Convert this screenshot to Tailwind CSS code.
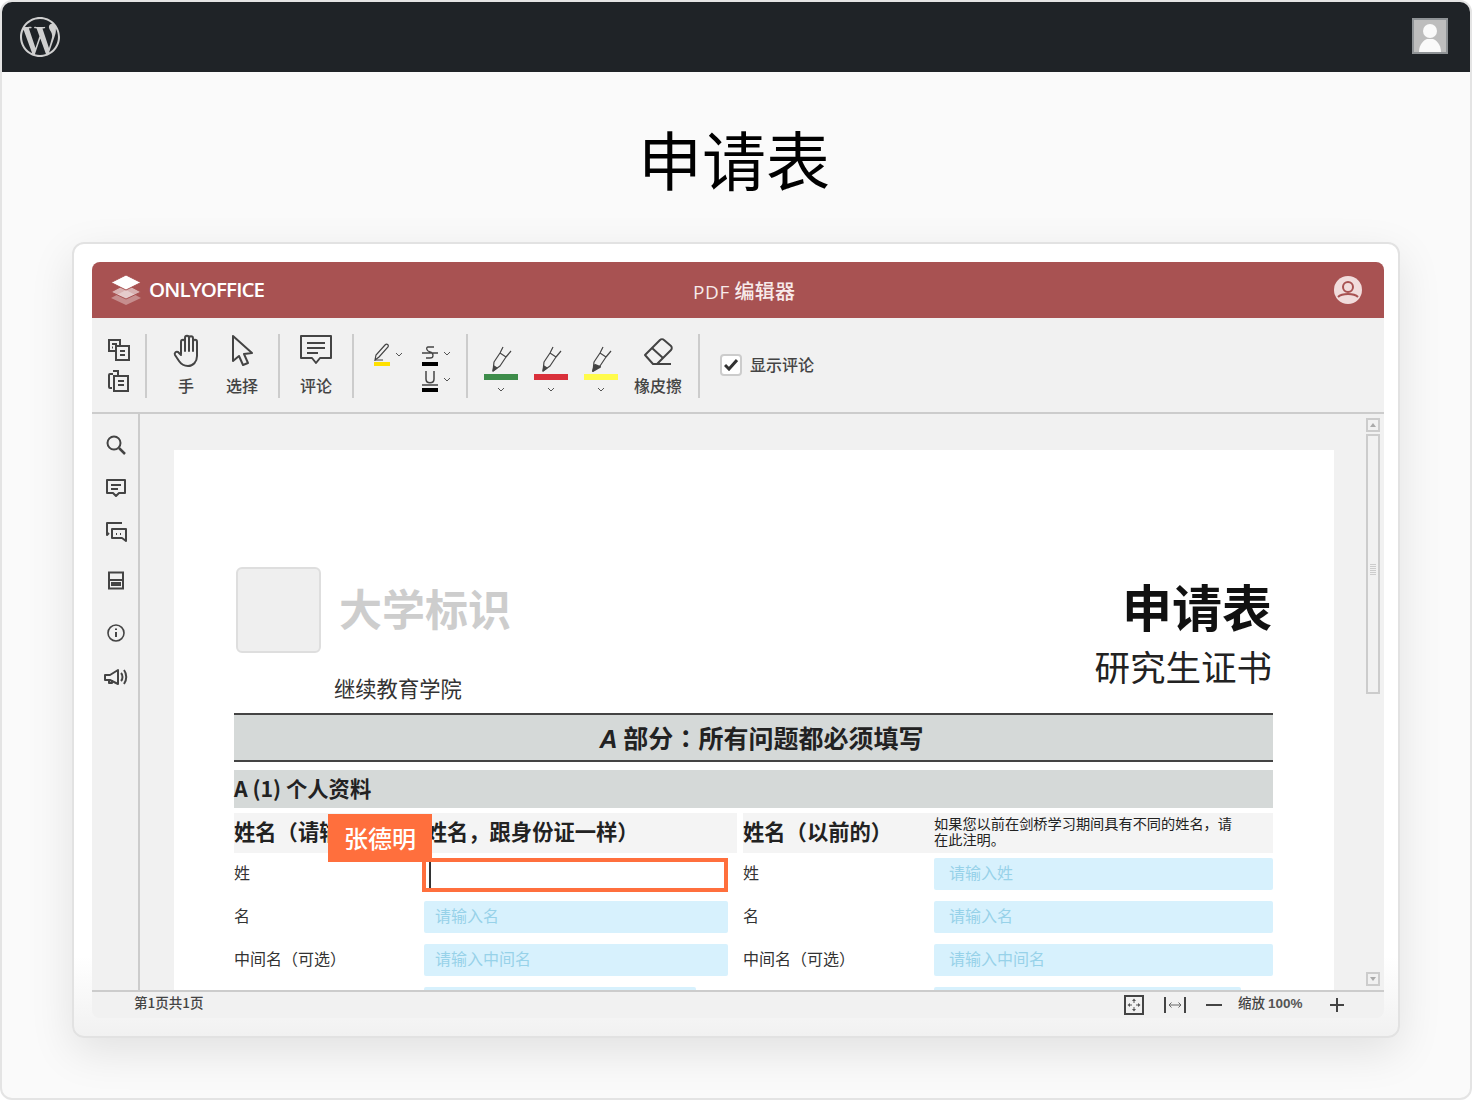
<!DOCTYPE html>
<html lang="zh">
<head>
<meta charset="utf-8">
<title>申请表</title>
<script src="https://cdn.jsdelivr.net/npm/@tailwindcss/browser@4"></script>
</head>
<body class="bg-white">
<div class="w-[1472px] h-[1100px] border-2 border-[#e4e4e4] rounded-[12px] overflow-hidden bg-[#fafafa] font-['Noto_Sans_CJK_SC',sans-serif] flex flex-col">
  <header class="h-[70px] shrink-0 bg-[#1f2327] flex items-center justify-between pl-[18px] pr-[22px]">
    <svg class="w-[40px] h-[40px]" viewBox="0 0 24 24" fill="#cfcfcf"><path d="M21.469 6.825c.84 1.537 1.318 3.3 1.318 5.175 0 3.979-2.156 7.456-5.363 9.325l3.295-9.527c.615-1.54.82-2.771.82-3.864 0-.405-.026-.78-.07-1.11m-7.981.105c.647-.03 1.232-.105 1.232-.105.582-.075.514-.93-.067-.899 0 0-1.755.135-2.88.135-1.064 0-2.85-.15-2.85-.15-.585-.03-.661.855-.075.885 0 0 .54.061 1.125.09l1.68 4.605-2.37 7.08L5.354 6.9c.649-.03 1.234-.1 1.234-.1.585-.075.516-.93-.065-.896 0 0-1.746.138-2.874.138-.2 0-.438-.008-.69-.015C4.911 3.15 8.235 1.215 12 1.215c2.809 0 5.365 1.072 7.286 2.833-.046-.003-.091-.009-.141-.009-1.06 0-1.812.923-1.812 1.914 0 .89.513 1.643 1.06 2.531.411.72.89 1.643.89 2.977 0 .915-.354 1.994-.821 3.479l-1.075 3.585-3.9-11.61.001.014zM12 22.784c-1.059 0-2.081-.153-3.048-.437l3.237-9.406 3.315 9.087c.024.053.05.101.078.149-1.12.393-2.325.609-3.582.609M1.211 12c0-1.564.336-3.05.935-4.39L7.29 21.709C3.694 19.96 1.212 16.271 1.211 12M12 0C5.385 0 0 5.385 0 12s5.385 12 12 12 12-5.385 12-12S18.615 0 12 0"/></svg>
    <div class="w-[36px] h-[36px] mb-[2px] border-2 border-[#8f9396] bg-[#bdbdbd] overflow-hidden">
      <svg class="w-full h-full" viewBox="0 0 32 32" fill="#fafafa"><circle cx="16" cy="11" r="7"/><path d="M5 32c0-8 5-12 8-13h6c3 1 8 5 8 13z"/></svg>
    </div>
  </header>

  <h1 class="text-[64px] leading-[90px] font-normal text-black text-center mt-[40px] h-[131px] shrink-0 pr-[4px]">申请表</h1>

  <section class="ml-[70px] w-[1328px] h-[796px] -mt-[1px] bg-linear-to-b from-white from-[90%] to-[#f1f1f1] border-2 border-[#e2e2e2] rounded-[12px] shadow-[0_14px_44px_rgba(0,0,0,0.10)] pt-[18px] px-[18px] shrink-0">
    <div class="w-[1292px] h-[756px] rounded-[8px] overflow-hidden bg-[#f1f1f1] flex flex-col text-[#444]">

      <div class="h-[56px] shrink-0 bg-[#a85252] flex items-center justify-between pl-[18px] pr-[22px] relative text-white">
        <div class="flex items-center gap-[7px]">
          <svg class="w-[32px] h-[30px]" viewBox="0 0 32 30"><path d="M16 15l15 8-15 7-15-7z" fill="#fff" fill-opacity=".35"/><path d="M16 9l15 8-15 7-15-7z" fill="#fff" fill-opacity=".55" stroke="#a85252"/><path d="M16 0l15 7.500-15 7.500-15-7.500z" fill="#fff" stroke="#a85252"/></svg>
          <span class="font-['Open_Sans',sans-serif] font-semibold text-[20.500px] tracking-[-0.9px] -mt-[2px]">ONLYOFFICE</span>
        </div>
        <div class="absolute left-[601px] top-[15px] text-[20px] leading-[28px] tracking-[0.2px] font-medium text-[#f7eaea]"><span class="font-['Open_Sans',sans-serif] font-normal text-[19px] tracking-[0.6px]">PDF</span> 编辑器</div>
        <svg class="w-[28px] h-[28px]" viewBox="0 0 28 28"><circle cx="14" cy="14" r="14" fill="#f1dcdc"/><circle cx="14" cy="11" r="5" fill="none" stroke="#a85252" stroke-width="2"/><path d="M4 21c4-4 16-4 20 0" fill="none" stroke="#a85252" stroke-width="2"/></svg>
      </div>

      <div class="h-[94px] shrink-0 flex items-center text-[16px] leading-[20px] font-medium pb-[2px]">
        <div class="w-[53px] flex flex-col items-center gap-[7px] pl-[1px] mt-[3px]">
          <svg class="w-[24px] h-[24px]" viewBox="0 0 24 24" fill="none" stroke="#444" stroke-width="2"><path d="M8 13H2V2h11v5"/><path d="M5 6h5M5 9.500h1"/><rect x="9" y="8" width="13" height="14"/><path d="M13 13h5M13 17h5"/></svg>
          <svg class="w-[24px] h-[24px]" viewBox="0 0 24 24" fill="none" stroke="#444" stroke-width="2"><path d="M5 19H3a1 1 0 0 1-1-1V6a1 1 0 0 1 1-1h3M6 2h5v5"/><rect x="7" y="7" width="14" height="15"/><path d="M11 12h6M11 16h6"/></svg>
        </div>
        <div class="w-[2px] h-[64px] bg-[#ccc] mt-[3px]"></div>
        <div class="w-[131px] flex items-center">
          <div class="w-[78px] flex flex-col items-center gap-[7px]">
            <svg class="w-[30px] h-[34px] ml-[3px]" viewBox="0 0 30 34" fill="none" stroke="#444" stroke-width="2" stroke-linecap="round" stroke-linejoin="round"><path d="M8 20V8c0-3 4-3 4 0v9M12 15V4c0-3 4-3 4 0v13M16 15V4.500c0-3 4-3 4 0V17M20 17V8c0-3 4-3 4 0v14c0 6-4 10-9 10-4 0-7-2-9-5l-4-6c-1-2 1-4 3-3l3 3"/></svg>
            <span>手</span>
          </div>
          <div class="w-[34px] flex flex-col items-center gap-[7px]">
            <svg class="w-[24px] h-[34px]" viewBox="0 0 24 34" fill="none" stroke="#444" stroke-width="2" stroke-linejoin="round"><path d="M3 2v25l6-5 4 9 5-2-4-9 8-1z"/></svg>
            <span>选择</span>
          </div>
        </div>
        <div class="w-[2px] h-[64px] bg-[#ccc] mt-[3px]"></div>
        <div class="w-[72px] flex flex-col items-center gap-[7px]">
          <svg class="w-[34px] h-[34px]" viewBox="0 0 34 34" fill="none" stroke="#444" stroke-width="2" stroke-linejoin="round"><path d="M2 2h30v22H21l-4 5-4-5H2z"/><path d="M8 9h18M8 14h18M8 19h11"/></svg>
          <span>评论</span>
        </div>
        <div class="w-[2px] h-[64px] bg-[#ccc] mt-[3px]"></div>
        <div class="w-[112px] h-[60px] flex items-start pl-[20px] gap-[19px]">
          <div class="flex items-center pt-[9px]">
            <div class="flex flex-col items-center">
              <svg class="w-[16px] h-[18px]" viewBox="0 0 16 18" fill="none" stroke="#444" stroke-width="1.200"><path d="M1 17l1-5 9-10c2-2 4 0 3 2L5 14z"/><path d="M1 17h8"/></svg>
              <div class="w-[16px] h-[4px] bg-[#ffe000] mt-[1px]"></div>
            </div>
            <svg class="w-[8px] h-[5px] ml-[5px]" viewBox="0 0 8 5" fill="none" stroke="#555"><path d="M1 1l3 3 3-3"/></svg>
          </div>
          <div class="flex flex-col gap-[5px] pt-[11px]">
            <div class="flex items-center">
              <div class="flex flex-col items-center w-[16px]">
                <svg class="w-[16px] h-[15px]" viewBox="0 0 16 15" fill="none" stroke="#444" stroke-width="1.300"><path d="M12 2H6C4 2 4 6 8 7c4 1 4 6 0 6H4M0 8h16"/></svg>
                <div class="w-[16px] h-[4px] bg-black mt-[2px]"></div>
              </div>
              <svg class="w-[8px] h-[5px] ml-[5px] -mt-[5px]" viewBox="0 0 8 5" fill="none" stroke="#555"><path d="M1 1l3 3 3-3"/></svg>
            </div>
            <div class="flex items-center">
              <div class="flex flex-col items-center w-[16px]">
                <svg class="w-[16px] h-[15px]" viewBox="0 0 16 15" fill="none" stroke="#444" stroke-width="1.500"><path d="M4 0v8c0 5 8 5 8 0V0M0 14h16"/></svg>
                <div class="w-[16px] h-[4px] bg-black mt-[2px]"></div>
              </div>
              <svg class="w-[8px] h-[5px] ml-[5px] -mt-[5px]" viewBox="0 0 8 5" fill="none" stroke="#555"><path d="M1 1l3 3 3-3"/></svg>
            </div>
          </div>
        </div>
        <div class="w-[2px] h-[64px] bg-[#ccc] mt-[3px]"></div>
        <div class="w-[230px] h-[60px] flex items-start pl-[16px] pt-[12px]">
          <div class="w-[34px] flex flex-col items-center">
            <svg class="w-[24px] h-[26px] ml-[4px]" viewBox="0 0 24 26" fill="none" stroke="#444" stroke-width="1.200" stroke-linejoin="round"><path d="M12 1L9 7l-6 9-1 9 7-5 6-9 5-6"/><path d="M9 7l6 4"/><path d="M2 25l1-5 3 2z" fill="#444"/></svg>
            <div class="w-[34px] h-[6px] bg-[#3d8c4a] mt-[2px]"></div>
            <svg class="w-[8px] h-[5px] mt-[7px]" viewBox="0 0 8 5" fill="none" stroke="#555"><path d="M1 1l3 3 3-3"/></svg>
          </div>
          <div class="w-[34px] flex flex-col items-center ml-[16px]">
            <svg class="w-[24px] h-[26px] ml-[4px]" viewBox="0 0 24 26" fill="none" stroke="#444" stroke-width="1.200" stroke-linejoin="round"><path d="M12 1L9 7l-6 9-1 9 7-5 6-9 5-6"/><path d="M9 7l6 4"/><path d="M2 25l1-5 3 2z" fill="#444"/></svg>
            <div class="w-[34px] h-[6px] bg-[#d9303a] mt-[2px]"></div>
            <svg class="w-[8px] h-[5px] mt-[7px]" viewBox="0 0 8 5" fill="none" stroke="#555"><path d="M1 1l3 3 3-3"/></svg>
          </div>
          <div class="w-[34px] flex flex-col items-center ml-[16px]">
            <svg class="w-[24px] h-[26px] ml-[4px]" viewBox="0 0 24 26" fill="none" stroke="#444" stroke-width="1.200" stroke-linejoin="round"><path d="M12 1L9 7l-6 9-1 9 7-5 6-9 5-6"/><path d="M9 7l6 4"/><path d="M2 25l2-6 5 2z" fill="#444" stroke-width="2"/></svg>
            <div class="w-[34px] h-[6px] bg-[#fffb4b] mt-[2px]"></div>
            <svg class="w-[8px] h-[5px] mt-[7px]" viewBox="0 0 8 5" fill="none" stroke="#555"><path d="M1 1l3 3 3-3"/></svg>
          </div>
          <div class="w-[50px] flex flex-col items-center ml-[15px] -mt-[9px]">
            <svg class="w-[30px] h-[30px]" viewBox="0 0 30 30" fill="none" stroke="#444" stroke-width="2" stroke-linejoin="round"><path d="M2 18L17 3c1-1 3-1 4 0l7 6c1 1 1 3 0 4L14 27H10z"/><path d="M9 11l11 10M12 27h16"/></svg>
            <span class="mt-[8px] whitespace-nowrap">橡皮擦</span>
          </div>
        </div>
        <div class="w-[2px] h-[64px] bg-[#ccc] mt-[3px]"></div>
        <div class="flex items-center pl-[20px] gap-[8px] mt-[2px]">
          <div class="w-[22px] h-[22px] bg-white border-2 border-[#ccc] rounded-[4px] flex items-center justify-center">
            <svg class="w-[14px] h-[12px]" viewBox="0 0 14 12" fill="none" stroke="#333" stroke-width="3"><path d="M1 6l4 4 8-9"/></svg>
          </div>
          <span class="-mt-[3px]">显示评论</span>
        </div>
      </div>

      <div class="h-[578px] shrink-0 border-t-2 border-[#ccc] flex overflow-hidden">
        <aside class="w-[48px] shrink-0 border-r-2 border-[#ccc] flex flex-col items-center pt-[19px] gap-[19px] pl-[2px]">
          <svg class="w-[24px] h-[24px]" viewBox="0 0 24 24" fill="none" stroke="#444" stroke-width="2"><circle cx="10" cy="10" r="6.500"/><path d="M15 15l6 6" stroke-width="2.500"/></svg>
          <svg class="w-[24px] h-[24px]" viewBox="0 0 24 24" fill="none" stroke="#444" stroke-width="2" stroke-linejoin="round"><path d="M3 4h18v13h-6l-3 3-3-3H3z"/><path d="M7 9h10M7 13h7"/></svg>
          <svg class="w-[24px] h-[24px] mt-[1px]" viewBox="0 0 24 24" fill="none" stroke="#444" stroke-width="2" stroke-linejoin="round"><path d="M18 3H3v12l2-2"/><path d="M8 9h14v12l-4-3H8z"/><path d="M12 14h1M16 14h1"/></svg>
          <svg class="w-[24px] h-[24px] mt-[6px]" viewBox="0 0 24 24" fill="none" stroke="#444" stroke-width="2"><rect x="5" y="3.500" width="14" height="16"/><path d="M5 11h14"/><path d="M7 13h10v4H7z" fill="#444" stroke="none"/></svg>
          <svg class="w-[24px] h-[24px] mt-[9px]" viewBox="0 0 24 24" fill="none" stroke="#444" stroke-width="1.600"><circle cx="12" cy="12" r="8"/><path d="M12 11v5" stroke-width="2"/><path d="M12 7.500v1.500" stroke-width="2"/></svg>
          <svg class="w-[26px] h-[24px] mt-[1px] ml-[2px]" viewBox="0 0 26 24" fill="none" stroke="#444" stroke-width="2" stroke-linejoin="round"><path d="M1 10h5l8-5v14l-8-4H1z"/><path d="M5 15v3h3v-3"/><path d="M17 8c2 2 2 6 0 8M20 5c3 4 3 10 0 14"/></svg>
        </aside>

        <main class="flex-1 relative overflow-hidden pl-[34px] pt-[36px]">
          <div class="w-[1160px] h-[700px] bg-white pl-[60px] pr-[61px] pt-[117px] text-[#333]">
            <div class="h-[146px] flex justify-between">
              <div>
                <div class="flex items-center gap-[18px] pl-[2px]">
                  <div class="w-[85px] h-[86px] bg-[#efefef] border-2 border-[#dedede] rounded-[6px]"></div>
                  <span class="text-[43px] leading-[60px] font-bold text-[#cdcdcd] -mt-[6px]">大学标识</span>
                </div>
                <div class="pl-[100px] mt-[21px] text-[21.300px] leading-[28px] font-normal">继续教育学院</div>
              </div>
              <div class="text-right pr-[1px]">
                <div class="text-[50px] leading-[70px] font-bold text-[#111] mt-[3px]">申请表</div>
                <div class="text-[35.500px] leading-[50px] font-normal text-[#222] mt-[1px]">研究生证书</div>
              </div>
            </div>
            <div class="h-[49px] border-y-2 border-[#444] bg-[#d5d9d8] text-center text-[25px] leading-[44px] font-bold text-[#222] pl-[16px]"><span class="italic font-['Liberation_Sans',sans-serif]">A</span> 部分<span lang="zh-TW" class="font-['Noto_Sans_CJK_TC',sans-serif]">：</span>所有问题都必须填写</div>
            <div class="h-[38px] mt-[8px] bg-[#d5d9d8] text-[21.300px] leading-[36px] font-bold text-[#222]">A (1) 个人资料</div>
            <div class="relative mt-[5px]">
              <div class="grid grid-cols-[503px_530px] gap-x-[6px]">
                <div class="h-[40px] bg-[#f4f4f4] text-[21.300px] leading-[36px] font-bold text-[#222] whitespace-nowrap">姓名（请输入您真实姓名，跟身份证一样）</div>
                <div class="h-[40px] bg-[#f4f4f4] flex font-bold text-[#222]">
                  <span class="w-[191px] shrink-0 text-[21.300px] leading-[36px]">姓名（以前的）</span>
                  <span class="text-[14.200px] leading-[16px] pt-[2px] font-normal w-[302px]">如果您以前在剑桥学习期间具有不同的姓名，请在此注明。</span>
                </div>
              </div>
              <div class="grid grid-cols-[190px_304px_15px_191px_339px] text-[16px] leading-[28px] mt-[5px] gap-y-[11px] font-normal">
                <span>姓</span>
                <div class="h-[32px] bg-white relative"><div class="absolute -left-[2px] right-0 top-0 h-[34px] border-4 border-[#ff6f3d]"><div class="w-[2px] h-[26px] bg-[#333] ml-[3px]"></div></div></div>
                <span></span><span>姓</span>
                <div class="h-[32px] rounded-[2px] bg-[#d7f1fd] text-[#97d2e9] pl-[15px]">请输入姓</div>

                <span>名</span>
                <div class="h-[32px] rounded-[2px] bg-[#d7f1fd] text-[#97d2e9] pl-[11px]">请输入名</div>
                <span></span><span>名</span>
                <div class="h-[32px] rounded-[2px] bg-[#d7f1fd] text-[#97d2e9] pl-[15px]">请输入名</div>

                <span>中间名（可选）</span>
                <div class="h-[32px] rounded-[2px] bg-[#d7f1fd] text-[#97d2e9] pl-[11px]">请输入中间名</div>
                <span></span><span>中间名（可选）</span>
                <div class="h-[32px] rounded-[2px] bg-[#d7f1fd] text-[#97d2e9] pl-[15px]">请输入中间名</div>

                <span></span>
                <div class="h-[32px] w-[272px] rounded-[2px] bg-[#d7f1fd]"></div>
                <span></span><span></span>
                <div class="h-[32px] w-[307px] rounded-[2px] bg-[#d7f1fd]"></div>
              </div>
              <div class="absolute left-[94px] top-[1px] w-[104px] h-[48px] bg-[#ff6f3d] text-white text-[24px] leading-[48px] text-center font-medium">张德明</div>
            </div>
          </div>

          <div class="absolute left-[1226px] top-[4px] w-[14px] h-[14px] border-2 border-[#ccc] flex items-center justify-center">
            <svg class="w-[6px] h-[4px]" viewBox="0 0 6 4" fill="#aaa"><path d="M3 0l3 4H0z"/></svg>
          </div>
          <div class="absolute left-[1226px] top-[20px] w-[14px] h-[260px] border-2 border-[#ccc] flex items-center justify-center">
            <div class="w-[6px] h-[12px] mt-[12px] bg-[repeating-linear-gradient(#ccc_0_1px,transparent_1px_2px)]"></div>
          </div>
          <div class="absolute left-[1226px] top-[558px] w-[14px] h-[14px] border-2 border-[#ccc] flex items-center justify-center">
            <svg class="w-[6px] h-[4px]" viewBox="0 0 6 4" fill="#aaa"><path d="M3 4l3-4H0z"/></svg>
          </div>
        </main>
      </div>

      <footer class="h-[28px] shrink-0 border-t-2 border-[#ccc] flex items-center pl-[42px] text-[13.500px] leading-[20px] font-medium text-[#444]">
        <span class="-mt-[7px]">第1页共1页</span>
        <div class="ml-auto flex items-center pr-[40px]">
          <svg class="w-[20px] h-[20px]" viewBox="0 0 20 20" fill="none" stroke="#444"><rect x="1" y="1" width="18" height="18" stroke-width="2"/><path d="M10 5v3M10 12v3M5 10h3M12 10h3" stroke="#555"/><path d="M10 3.500l-2 2.500h4zM10 16.500l-2-2.500h4zM3.500 10l2.500-2v4zM16.500 10l-2.500-2v4z" fill="#555" stroke="none"/></svg>
          <svg class="w-[22px] h-[18px] ml-[20px]" viewBox="0 0 22 18" fill="none" stroke="#444"><path d="M1 1v16M21 1v16" stroke-width="2"/><path d="M5 9h12M7.500 6.500L5 9l2.500 2.500M14.500 6.500L17 9l-2.500 2.500" stroke="#666"/></svg>
          <div class="w-[16px] h-[2px] bg-[#444] ml-[20px]"></div>
          <span class="ml-[16px] -mt-[5px] w-[65px] whitespace-nowrap">缩放 <span class="font-['Liberation_Sans',sans-serif] font-bold text-[#555]">100%</span></span>
          <svg class="w-[14px] h-[14px] ml-[27px]" viewBox="0 0 14 14" stroke="#444" stroke-width="2"><path d="M7 0v14M0 7h14"/></svg>
        </div>
      </footer>
    </div>
  </section>
</div>
</body>
</html>
